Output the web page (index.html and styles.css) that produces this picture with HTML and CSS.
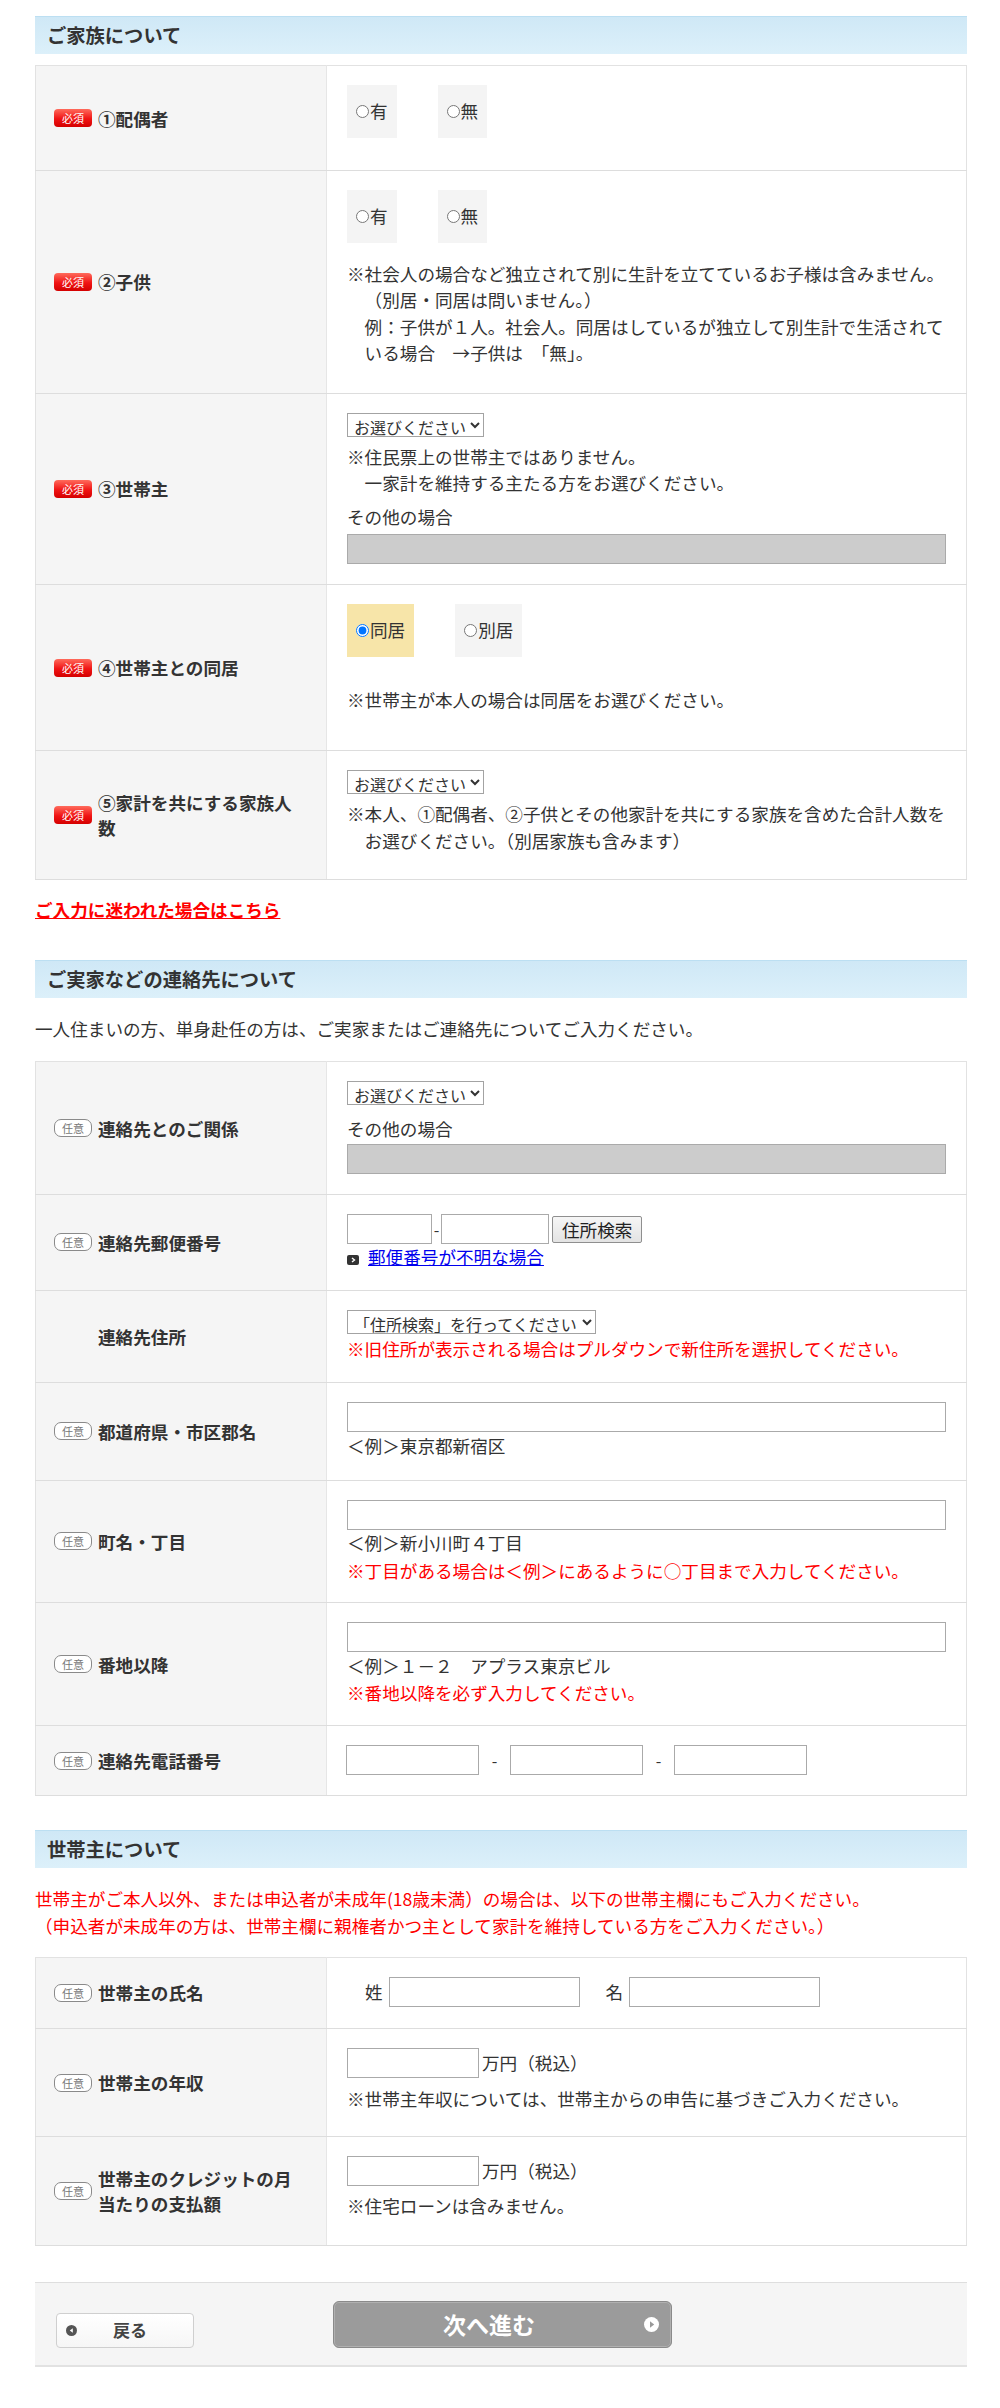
FILE: index.html
```html
<!DOCTYPE html>
<html lang="ja">
<head>
  <meta charset="UTF-8">
  <meta name="viewport" content="width=device-width, initial-scale=1.0">
  <title>ご家族について</title>
  <link rel="stylesheet" href="styles.css">
</head>
<body>
<div class="wrap">

  <h2 class="sec-title">ご家族について</h2>
  <table class="form-table">
    <tr>
      <th><div class="lbl"><span class="req">必須</span><span>①配偶者</span></div></th>
      <td>
        <div class="radios mb12">
          <label class="radio"><input type="radio" name="spouse">有</label>
          <label class="radio"><input type="radio" name="spouse">無</label>
        </div>
      </td>
    </tr>
    <tr>
      <th><div class="lbl"><span class="req">必須</span><span>②子供</span></div></th>
      <td class="pb26">
        <div class="radios mb18">
          <label class="radio"><input type="radio" name="child">有</label>
          <label class="radio"><input type="radio" name="child">無</label>
        </div>
        <p class="note">※社会人の場合など独立されて別に生計を立てているお子様は含みません。<br><span class="ind">（別居・同居は問いません。）</span></p>
        <p class="note ind">例：子供が１人。社会人。同居はしているが独立して別生計で生活されて<br>いる場合　→子供は　「無」。</p>
      </td>
    </tr>
    <tr>
      <th><div class="lbl"><span class="req">必須</span><span>③世帯主</span></div></th>
      <td>
        <select class="sel"><option>お選びください</option></select>
        <p class="note mt7">※住民票上の世帯主ではありません。<br>　一家計を維持する主たる方をお選びください。</p>
        <p class="note mt8">その他の場合</p>
        <input class="gray mt3" type="text" disabled>
      </td>
    </tr>
    <tr>
      <th><div class="lbl"><span class="req">必須</span><span>④世帯主との同居</span></div></th>
      <td class="pb37">
        <div class="radios mb30">
          <label class="radio on"><input type="radio" name="live" checked>同居</label>
          <label class="radio"><input type="radio" name="live">別居</label>
        </div>
        <p class="note">※世帯主が本人の場合は同居をお選びください。</p>
      </td>
    </tr>
    <tr>
      <th><div class="lbl"><span class="req">必須</span><span>⑤家計を共にする家族人数</span></div></th>
      <td class="pb25">
        <select class="sel"><option>お選びください</option></select>
        <p class="note mt7">※本人、①配偶者、②子供とその他家計を共にする家族を含めた合計人数を<br>　お選びください。（別居家族も含みます）</p>
      </td>
    </tr>
  </table>

  <p class="help"><a href="#">ご入力に迷われた場合はこちら</a></p>

  <h2 class="sec-title">ご実家などの連絡先について</h2>
  <p class="lead">一人住まいの方、単身赴任の方は、ご実家またはご連絡先についてご入力ください。</p>
  <table class="form-table">
    <tr>
      <th><div class="lbl"><span class="opt">任意</span><span>連絡先とのご関係</span></div></th>
      <td>
        <select class="sel"><option>お選びください</option></select>
        <p class="note mt11">その他の場合</p>
        <input class="gray mt2" type="text" disabled>
      </td>
    </tr>
    <tr>
      <th><div class="lbl"><span class="opt">任意</span><span>連絡先郵便番号</span></div></th>
      <td class="pb19">
        <div class="zip">
          <input class="txt zip1" type="text"><span class="zip-dash">-</span><input class="txt zip2" type="text">
          <button class="btn-search" type="button">住所検索</button>
        </div>
        <p class="note"><span class="arrow-ico"><svg width="12" height="10" viewBox="0 0 12 10"><rect width="12" height="10" rx="2" fill="#333"/><path d="M5 3l2.5 2L5 7" stroke="#fff" stroke-width="1.4" fill="none"/></svg></span><a href="#" class="blue">郵便番号が不明な場合</a></p>
      </td>
    </tr>
    <tr>
      <th><div class="lbl no-badge"><span>連絡先住所</span></div></th>
      <td>
        <select class="sel"><option>「住所検索」を行ってください</option></select>
        <p class="note warn mt2">※旧住所が表示される場合はプルダウンで新住所を選択してください。</p>
      </td>
    </tr>
    <tr>
      <th><div class="lbl"><span class="opt">任意</span><span>都道府県・市区郡名</span></div></th>
      <td>
        <input class="txt full" type="text">
        <p class="note mt1">＜例＞東京都新宿区</p>
      </td>
    </tr>
    <tr>
      <th><div class="lbl"><span class="opt">任意</span><span>町名・丁目</span></div></th>
      <td class="pb18">
        <input class="txt full" type="text">
        <p class="note">＜例＞新小川町４丁目</p>
        <p class="note warn mt2">※丁目がある場合は＜例＞にあるように○丁目まで入力してください。</p>
      </td>
    </tr>
    <tr>
      <th><div class="lbl"><span class="opt">任意</span><span>番地以降</span></div></th>
      <td class="pb19">
        <input class="txt full" type="text">
        <p class="note mt1">＜例＞１－２　アプラス東京ビル</p>
        <p class="note warn">※番地以降を必ず入力してください。</p>
      </td>
    </tr>
    <tr>
      <th><div class="lbl"><span class="opt">任意</span><span>連絡先電話番号</span></div></th>
      <td>
        <div class="tel">
          <input class="txt tel-in" type="text"><span class="tel-dash">-</span><input class="txt tel-in" type="text"><span class="tel-dash">-</span><input class="txt tel-in" type="text">
        </div>
      </td>
    </tr>
  </table>

  <h2 class="sec-title sec-gap">世帯主について</h2>
  <p class="lead warn">世帯主がご本人以外、または申込者が未成年(18歳未満）の場合は、以下の世帯主欄にもご入力ください。<br>（申込者が未成年の方は、世帯主欄に親権者かつ主として家計を維持している方をご入力ください。）</p>
  <table class="form-table">
    <tr>
      <th><div class="lbl"><span class="opt">任意</span><span>世帯主の氏名</span></div></th>
      <td class="pb21">
        <div class="names">
          <span class="name-lbl">姓</span><input class="txt name-in" type="text">
          <span class="name-lbl second">名</span><input class="txt name-in" type="text">
        </div>
      </td>
    </tr>
    <tr>
      <th><div class="lbl"><span class="opt">任意</span><span>世帯主の年収</span></div></th>
      <td class="pb24">
        <div class="money"><input class="txt money-in" type="text"><span>万円（税込）</span></div>
        <p class="note mt8">※世帯主年収については、世帯主からの申告に基づきご入力ください。</p>
      </td>
    </tr>
    <tr>
      <th><div class="lbl"><span class="opt">任意</span><span>世帯主のクレジットの月当たりの支払額</span></div></th>
      <td class="pb25">
        <div class="money"><input class="txt money-in" type="text"><span>万円（税込）</span></div>
        <p class="note mt7">※住宅ローンは含みません。</p>
      </td>
    </tr>
  </table>

  <div class="footer">
    <a href="#" class="btn-back">
      <svg width="11" height="11" viewBox="0 0 11 11"><circle cx="5.5" cy="5.5" r="5.5" fill="#555"/><path d="M6.8 3.2L3.8 5.5l3 2.3z" fill="#fff"/></svg>
      <span>戻る</span>
    </a>
    <a href="#" class="btn-next">
      <span class="next-text">次へ進む</span>
      <svg width="15" height="15" viewBox="0 0 15 15"><circle cx="7.5" cy="7.5" r="7.5" fill="#fff"/><path d="M6 4.3l4.2 3.2L6 10.7z" fill="#999"/></svg>
    </a>
  </div>

</div>
</body>
</html>
```

FILE: styles.css
```css
body {
  margin: 0;
  padding: 16px 33px 40px 35px;
  font-family: "Noto Sans CJK JP", "Noto Sans", sans-serif;
  font-size: 17.6px;
  line-height: 26.4px;
  color: #333;
  background: #fff;
}

.wrap {
  width: 932px;
}

.sec-title {
  height: 38px;
  box-sizing: border-box;
  margin: 0 0 11px;
  padding-left: 12px;
  border-top: 1px solid #bcdff2;
  background: linear-gradient(#cfe8f6, #dcf0fa);
  font-size: 19.3px;
  font-weight: 700;
  line-height: 36px;
  color: #333;
}

.sec-gap {
  margin-top: 34px;
}

.form-table {
  width: 100%;
  table-layout: fixed;
  border-collapse: collapse;
  border: 1px solid #e2e2e2;
}

.form-table th {
  width: 252px;
  padding: 0 20px 0 18px;
  background: #f5f5f5;
  border-bottom: 1px solid #ddd;
  border-right: 1px solid #e6e6e6;
  text-align: left;
  vertical-align: middle;
}

.form-table td {
  padding: 19px 20px 20px;
  border-bottom: 1px solid #ddd;
  vertical-align: top;
  background: #fff;
}

.lbl {
  display: flex;
  align-items: center;
  gap: 6px;
  font-size: 17.6px;
  font-weight: 700;
  line-height: 25px;
  color: #333;
}

.lbl.no-badge {
  padding-left: 44px;
}

.req,
.opt {
  flex-shrink: 0;
  width: 38px;
  height: 18px;
  box-sizing: border-box;
  font-size: 11px;
  font-weight: 400;
  text-align: center;
}

.req {
  border-radius: 4px;
  background: linear-gradient(#ff6b5c, #f01414 55%, #d40000);
  color: #fff;
  line-height: 18px;
}

.opt {
  border: 1px solid #8a8a8a;
  border-radius: 7px;
  background: #fff;
  color: #777;
  line-height: 16px;
}

/* radios */
.radios {
  display: flex;
  gap: 41px;
}

.radio {
  display: inline-flex;
  align-items: center;
  height: 53px;
  padding: 0 9px;
  background: #f4f4f4;
  color: #333;
}

.radio.on {
  background: #f7e5a9;
}

.radio input {
  width: 13px;
  height: 13px;
  margin: 0 1px 0 0;
}

/* text */
.note {
  margin: 0;
  white-space: nowrap;
}

.ind {
  padding-left: 1em;
}

.warn {
  color: #f00;
}

.help {
  margin: 17px 0 37px;
  font-weight: 700;
}

.help a {
  color: #f00;
}

.lead {
  margin: 18px 0 18px;
}

.blue {
  color: #0000ee;
}

.arrow-ico {
  display: inline-block;
  margin-right: 9px;
  vertical-align: -1px;
}

.arrow-ico svg {
  display: block;
}

/* controls */
.sel {
  display: block;
  height: 24px;
  padding: 0 0 0 2px;
  border: 1px solid #a3a3a3;
  background: #fff;
  font-family: "Noto Sans CJK JP", sans-serif;
  font-size: 16px;
  color: #333;
}

.txt {
  height: 30px;
  box-sizing: border-box;
  border: 1px solid #aaa;
  background: #fff;
  padding: 0 4px;
  font-size: 16px;
}

.full {
  display: block;
  width: 100%;
}

.gray {
  display: block;
  width: 100%;
  height: 30px;
  box-sizing: border-box;
  border: 1px solid #aaa;
  background: #ccc;
}

.zip {
  display: flex;
  align-items: center;
}

.zip1 {
  width: 85px;
}

.zip2 {
  width: 108px;
}

.zip-dash {
  width: 9px;
  text-align: center;
  font-size: 16px;
}

.btn-search {
  height: 27px;
  margin-left: 3px;
  padding: 0 9px;
  border: 1px solid #8f8f8f;
  border-radius: 2px;
  background: linear-gradient(#f6f6f6, #e3e3e3);
  font-family: "Noto Sans CJK JP", sans-serif;
  font-size: 17.6px;
  line-height: 25px;
  color: #222;
}

.tel {
  display: flex;
  align-items: center;
  margin-left: -1px;
}

.tel-in {
  width: 133px;
}

.tel-dash {
  width: 31px;
  text-align: center;
  font-size: 16px;
}

.names {
  display: flex;
  align-items: center;
}

.name-lbl {
  margin: 0 6px 0 18px;
}

.name-lbl.second {
  margin-left: 26px;
}

.name-in {
  width: 191px;
}

.money {
  display: flex;
  align-items: center;
}

.money-in {
  width: 132px;
  margin-right: 3px;
}

/* spacing helpers */
.mt1 { margin-top: 1px; }
.mt2 { margin-top: 2px; }
.mt3 { margin-top: 3px; }
.mt7 { margin-top: 7px; }
.mt8 { margin-top: 8px; }
.mt11 { margin-top: 11px; }
.mb12 { margin-bottom: 12px; }
.mb18 { margin-bottom: 18px; }
.mb30 { margin-bottom: 30px; }
.form-table td.pb18 { padding-bottom: 18px; }
.form-table td.pb19 { padding-bottom: 19px; }
.form-table td.pb21 { padding-bottom: 21px; }
.form-table td.pb24 { padding-bottom: 24px; }
.form-table td.pb25 { padding-bottom: 25px; }
.form-table td.pb26 { padding-bottom: 26px; }
.form-table td.pb37 { padding-bottom: 37px; }

/* footer */
.footer {
  display: flex;
  align-items: flex-end;
  gap: 139px;
  margin-top: 36px;
  padding: 18px 0 17px 21px;
  background: #f5f5f5;
  border-top: 1px solid #dedede;
  border-bottom: 2px solid #e2e2e2;
}

.btn-back {
  display: flex;
  align-items: center;
  width: 138px;
  height: 35px;
  box-sizing: border-box;
  padding-left: 9px;
  border: 1px solid #cfcfcf;
  border-radius: 4px;
  background: linear-gradient(#fff, #f6f6f6);
  color: #444;
  font-size: 17px;
  font-weight: 700;
  text-decoration: none;
}

.btn-back svg {
  margin-right: 36px;
}

.btn-next {
  display: flex;
  align-items: center;
  width: 339px;
  height: 47px;
  box-sizing: border-box;
  padding-right: 12px;
  border: 1px solid #8a8a8a;
  border-radius: 6px;
  box-shadow: inset 0 0 0 1px #b0b0b0;
  background: #9b9b9b;
  color: #fff;
  font-size: 23px;
  font-weight: 700;
  text-decoration: none;
}

.next-text {
  flex: 1;
  text-align: center;
}
```
